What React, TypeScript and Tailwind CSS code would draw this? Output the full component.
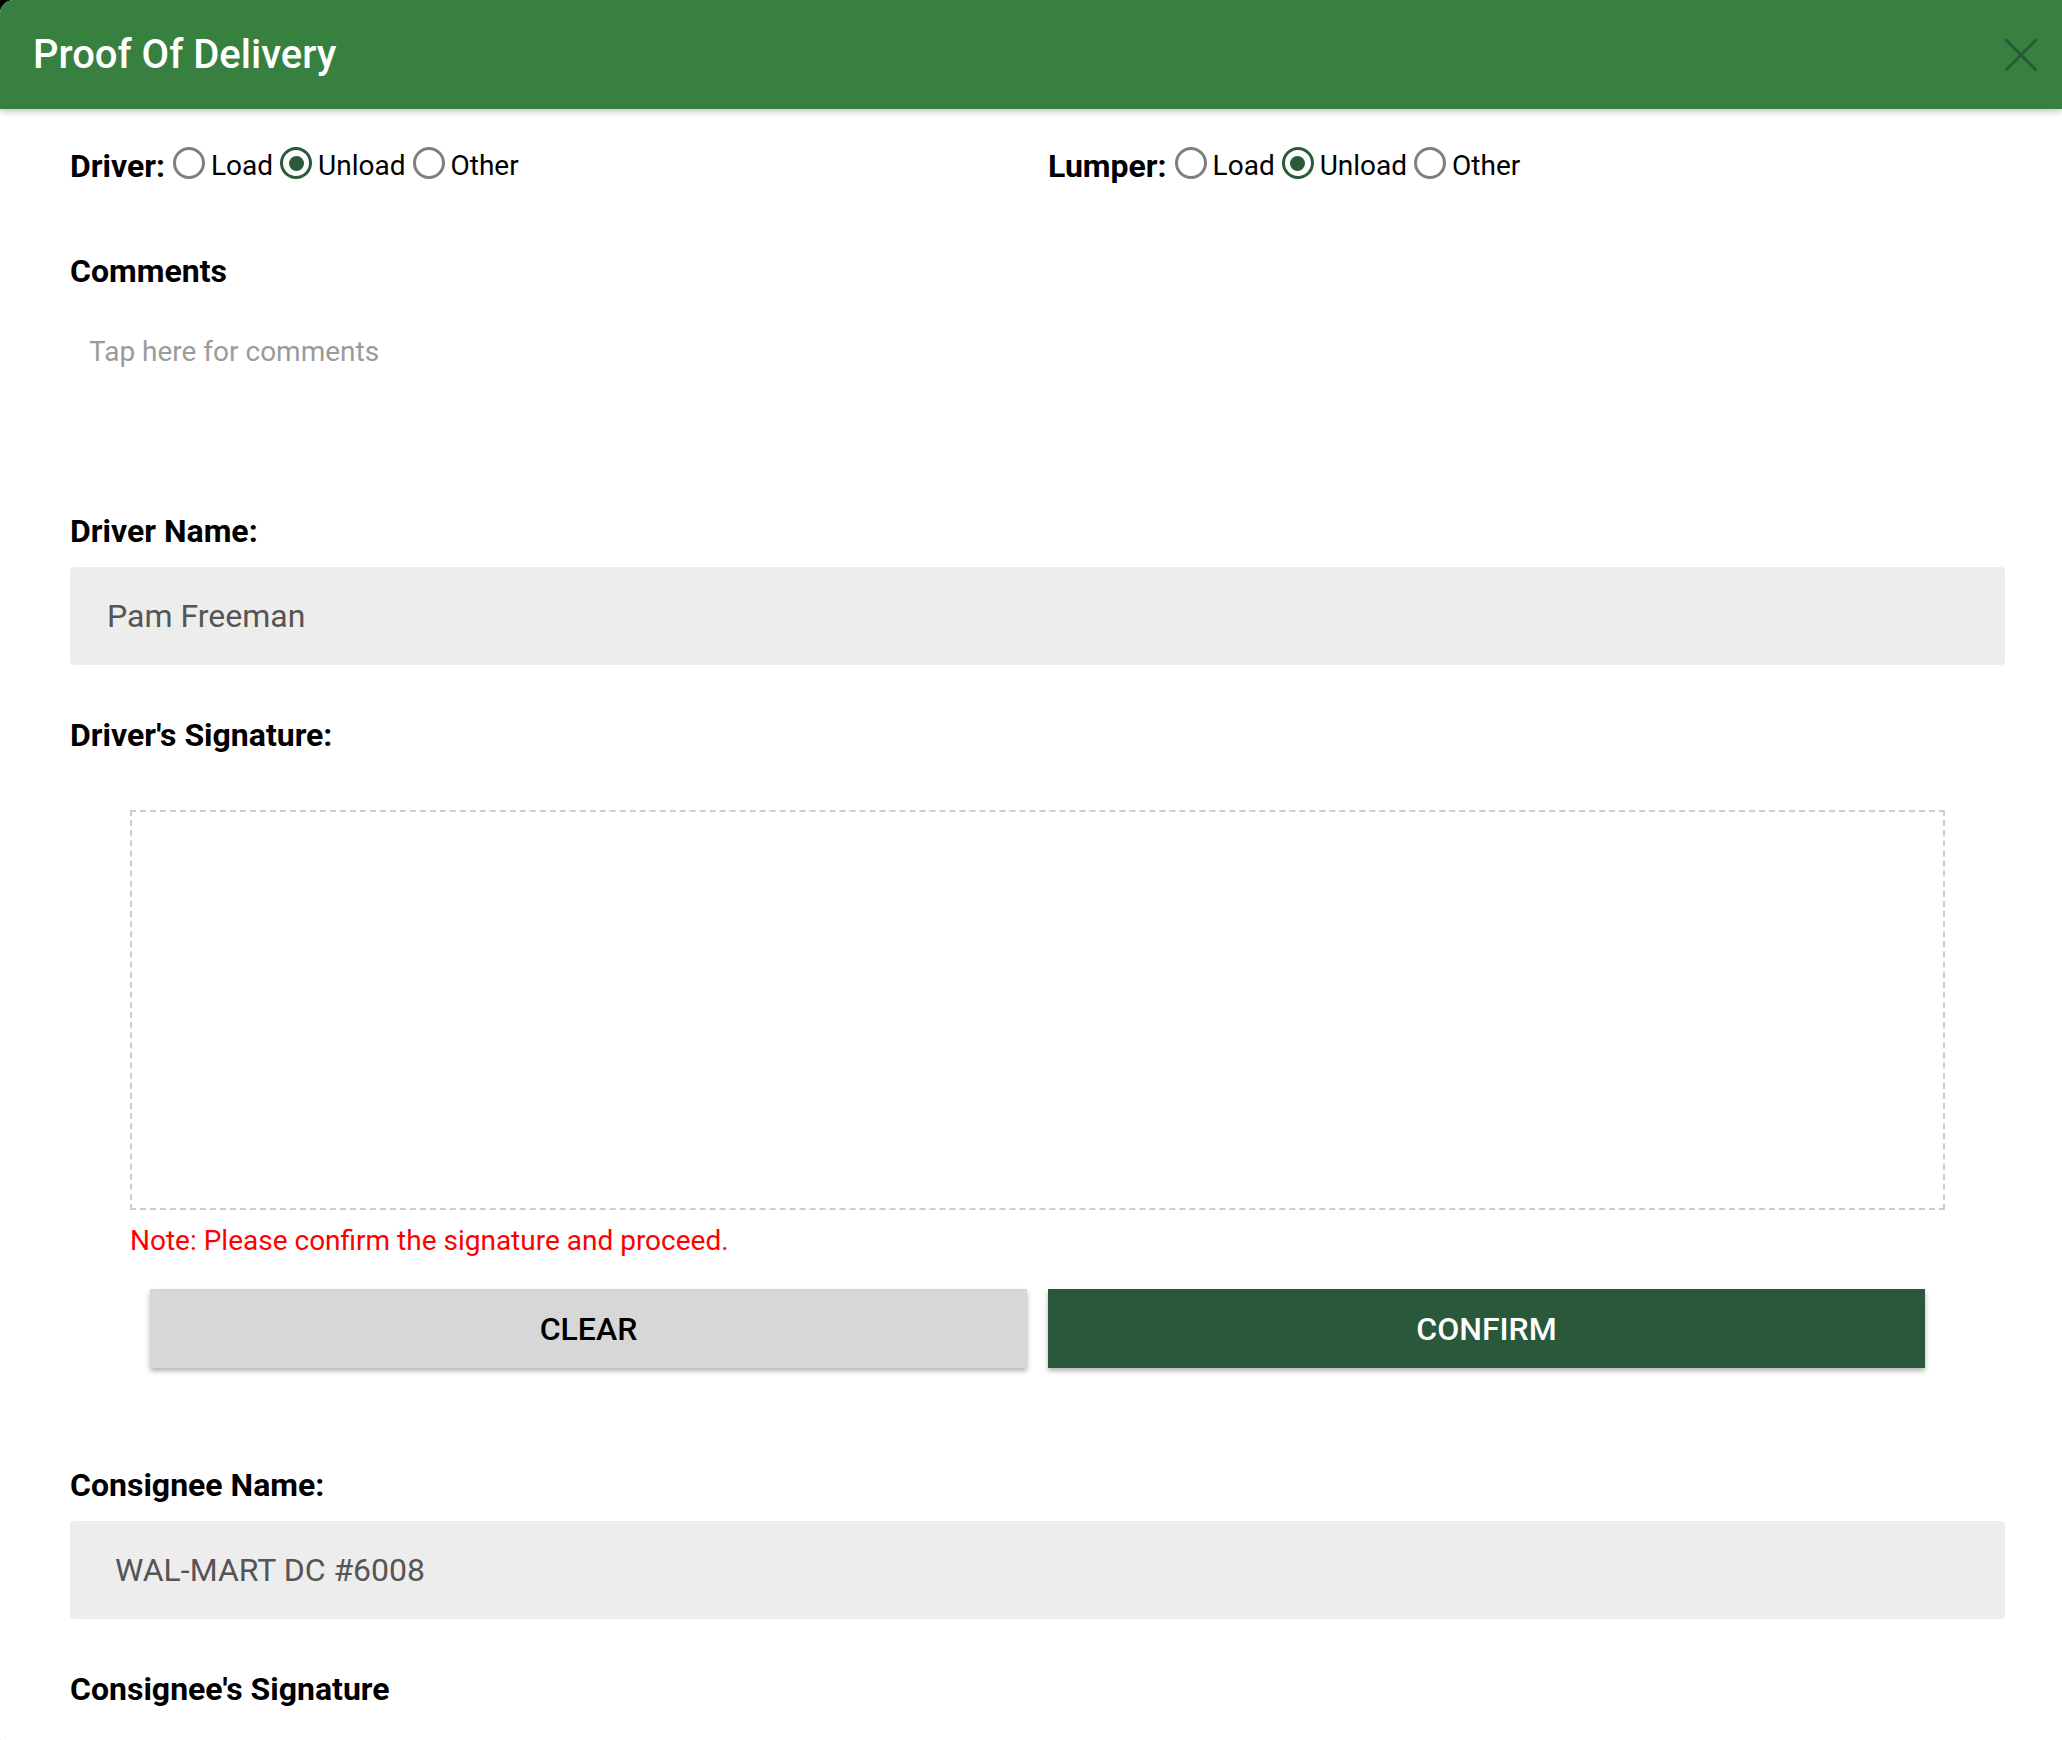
import { X } from 'lucide-react';

type RadioProps = { label: string; checked?: boolean };

const Radio = ({ label, checked }: RadioProps) => (
  <label className="flex items-center gap-[6px] mr-[7px]">
    <span
      className={
        checked
          ? 'w-[32px] h-[32px] -translate-y-[3px] rounded-full border-[3px] border-[#2a5a38] flex items-center justify-center'
          : 'w-[32px] h-[32px] -translate-y-[3px] rounded-full border-[3px] border-[#7f7f7f]'
      }
    >
      {checked && <span className="w-[15px] h-[15px] rounded-full bg-[#2a5a38]" />}
    </span>
    <span className="text-[28px] text-black">{label}</span>
  </label>
);

const RadioGroup = ({ title }: { title: string }) => (
  <div className="flex items-center h-[36px]">
    <span className="text-[32px] font-bold text-black mr-[8px]">{title}</span>
    <Radio label="Load" />
    <Radio label="Unload" checked />
    <Radio label="Other" />
  </div>
);

const App = () => {
  return (
    <div className="w-[2062px] h-[1740px] bg-black overflow-hidden font-['Roboto',sans-serif]">
      <div className="bg-white h-[1756px] rounded-tl-[14px] rounded-bl-[18px] overflow-hidden flex flex-col">
        {/* header */}
        <div className="relative z-10 h-[109px] shrink-0 bg-[#37803f] flex items-center justify-between pl-[33px] pr-[12px] shadow-[0_3px_6px_rgba(0,0,0,0.22)]">
          <h1 className="text-[40px] font-medium text-white leading-none">Proof Of Delivery</h1>
          <X className="w-[58px] h-[58px] text-[#2a5a38]" strokeWidth={1.3} />
        </div>

        <div className="pl-[70px] pr-[57px] pt-[39px]">
          <div className="grid grid-cols-[978px_1fr]">
            <RadioGroup title="Driver:" />
            <RadioGroup title="Lumper:" />
          </div>

          <div className="mt-[69px] text-[32px] font-bold leading-[36px] text-black">Comments</div>
          <div className="h-[224px] pt-[45px] pl-[19px]">
            <span className="text-[28px] leading-[36px] text-[#9b9b9b]">Tap here for comments</span>
          </div>

          <div className="text-[32px] font-bold leading-[36px] text-black">Driver Name:</div>
          <div className="mt-[18px] h-[98px] rounded-[4px] bg-[#ededed] flex items-center px-[37px] text-[32px] text-[#555]">
            Pam Freeman
          </div>

          <div className="mt-[52px] text-[32px] font-bold leading-[36px] text-black">Driver's Signature:</div>
          <div className="mx-[60px]">
            <div className="mt-[57px] h-[400px] border-2 border-dashed border-[#cccccc]" />
            <div className="mt-[13px] text-[28px] leading-[36px] text-[#ff0000]">
              Note: Please confirm the signature and proceed.
            </div>
            <div className="mt-[30px] px-[20px] grid grid-cols-2 gap-[21px]">
              <button className="h-[79px] bg-[#d7d7d7] text-black text-[32px] font-medium uppercase shadow-[0_3px_5px_rgba(0,0,0,0.3)]">
                Clear
              </button>
              <button className="h-[79px] bg-[#29583a] text-white text-[32px] font-medium uppercase shadow-[0_3px_5px_rgba(0,0,0,0.3)]">
                Confirm
              </button>
            </div>
          </div>

          <div className="mt-[99px] text-[32px] font-bold leading-[36px] text-black">Consignee Name:</div>
          <div className="mt-[18px] h-[98px] rounded-[4px] bg-[#ededed] flex items-center px-[45px] text-[32px] text-[#555]">
            WAL-MART DC #6008
          </div>

          <div className="mt-[52px] text-[32px] font-bold leading-[36px] text-black">Consignee's Signature</div>
        </div>
      </div>
    </div>
  );
};

export default App;
